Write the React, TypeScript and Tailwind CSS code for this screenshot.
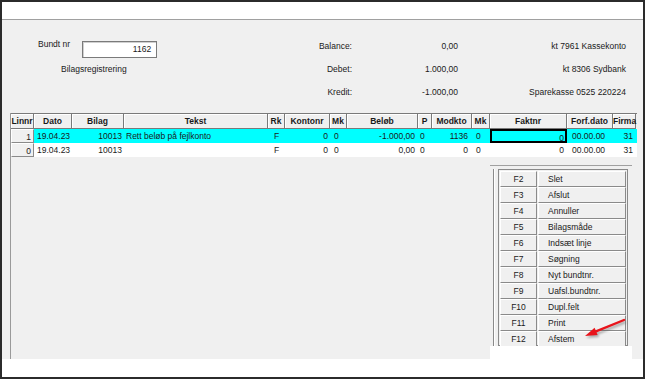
const COLS =
  "grid-cols-[23px_38px_52px_144px_17px_45px_17px_71px_14px_40px_18px_77px_46px_23px]";

const HEADERS = [
  "Linnr",
  "Dato",
  "Bilag",
  "Tekst",
  "Rk",
  "Kontonr",
  "Mk",
  "Beløb",
  "P",
  "Modkto",
  "Mk",
  "Faktnr",
  "Forf.dato",
  "Firma",
];

type Row = {
  linnr: string;
  dato: string;
  bilag: string;
  tekst: string;
  belob: string;
  modkto: string;
  active: boolean;
};

const ROWS: Row[] = [
  {
    linnr: "1",
    dato: "19.04.23",
    bilag: "10013",
    tekst: "Rett beløb på fejlkonto",
    belob: "-1.000,00",
    modkto: "1136",
    active: true,
  },
  {
    linnr: "0",
    dato: "19.04.23",
    bilag: "10013",
    tekst: "",
    belob: "0,00",
    modkto: "0",
    active: false,
  },
];

const KEYS = [
  ["F2", "Slet"],
  ["F3", "Afslut"],
  ["F4", "Annuller"],
  ["F5", "Bilagsmåde"],
  ["F6", "Indsæt linje"],
  ["F7", "Søgning"],
  ["F8", "Nyt bundtnr."],
  ["F9", "Uafsl.bundtnr."],
  ["F10", "Dupl.felt"],
  ["F11", "Print"],
  ["F12", "Afstem"],
];

const bevel =
  "border border-t-white border-l-white border-b-[#8a8a8a] border-r-[#8a8a8a] bg-[#f0f0f0]";

function DataRow({ row }: { row: Row }) {
  const cell = "h-[14px] leading-[14px] whitespace-nowrap overflow-hidden";
  return (
    <div className={`grid ${COLS} ${row.active ? "bg-[#00ffff]" : "bg-white"}`}>
      <div className={`${cell} ${bevel} pr-[2px] text-right leading-[12px]`}>
        {row.linnr}
      </div>
      <div className={`${cell} pl-[3px]`}>{row.dato}</div>
      <div className={`${cell} pr-[2px] text-right`}>{row.bilag}</div>
      <div className={`${cell} pl-[2px]`}>{row.tekst}</div>
      <div className={`${cell} text-center`}>F</div>
      <div className={`${cell} pr-[2px] text-right`}>0</div>
      <div className={`${cell} pl-[4px]`}>0</div>
      <div className={`${cell} pr-[3px] text-right`}>{row.belob}</div>
      <div className={`${cell} pl-[2px]`}>0</div>
      <div className={`${cell} pr-[4px] text-right`}>{row.modkto}</div>
      <div className={`${cell} pl-[4px]`}>0</div>
      {row.active ? (
        <div className={`${cell} border-2 border-black pr-[1px] text-right leading-[10px]`}>0</div>
      ) : (
        <div className={`${cell} pr-[3px] text-right`}>0</div>
      )}
      <div className={`${cell} pl-[5px]`}>00.00.00</div>
      <div className={`${cell} pr-[3px] text-right`}>31</div>
    </div>
  );
}

function Arrow() {
  return (
    <svg
      className="pointer-events-none absolute left-[576px] top-[311px]"
      width="54"
      height="32"
      viewBox="0 0 54 32"
    >
      <defs>
        <filter id="blur" x="-20%" y="-20%" width="140%" height="140%">
          <feGaussianBlur stdDeviation="1.2" />
        </filter>
      </defs>
      <g filter="url(#blur)" opacity="0.45" transform="translate(1.5 2)">
        <path d="M46 7 L18 18.4" stroke="#555" strokeWidth="2.6" />
        <path d="M7 23 L19.6 22.1 L16.6 14.7 Z" fill="#555" />
      </g>
      <path d="M46 7 L18 18.4" stroke="#e8141b" strokeWidth="2.4" strokeLinecap="round" />
      <path d="M7 23 L19.6 22.1 L16.6 14.7 Z" fill="#e8141b" />
    </svg>
  );
}

export default function App() {
  return (
    <div
      className="relative flex h-[379px] w-[645px] flex-col border-2 border-[#2b2b2b] bg-white text-[8.5px] text-[#1a1a1a]"
      style={{ fontFamily: '"Liberation Sans", Arial, sans-serif' }}
    >
      <div className="h-[18px] shrink-0 border-b border-[#a0a0a0] bg-white" />

      <div className="flex h-[339px] shrink-0 flex-col bg-[#f0f0f0]">
        {/* info area */}
        <div className="flex h-[93px] shrink-0 pt-[15px]">
          <div className="w-[298px]">
            <div className="flex h-[23px] items-start">
              <span className="pl-[36px] pt-[4px] leading-[10px]">Bundt nr</span>
              <div className="ml-[12px] mt-[6px] flex h-[17px] w-[75px] items-center justify-end border border-[#7a7a7a] bg-white pr-[5px] shadow-[inset_1px_1px_0_#d0d0d0]">
                1162
              </div>
            </div>
            <div className="h-[23px] pl-[59px] leading-[23px]">Bilagsregistrering</div>
          </div>
          <div className="w-[52px] text-right leading-[23px]">
            <div>Balance:</div>
            <div>Debet:</div>
            <div>Kredit:</div>
          </div>
          <div className="w-[106px] text-right leading-[23px]">
            <div>0,00</div>
            <div>1.000,00</div>
            <div>-1.000,00</div>
          </div>
          <div className="w-[168px] text-right leading-[23px]">
            <div>kt 7961 Kassekonto</div>
            <div>kt 8306 Sydbank</div>
            <div>Sparekasse 0525 220224</div>
          </div>
        </div>

        {/* table area */}
        <div className="ml-[8px] mr-[6px] flex flex-1 flex-col border-l border-[#9a9a9a]">
          <div className={`grid ${COLS} border-t border-[#7a7a7a] bg-[#f0f0f0]`}>
            {HEADERS.map((h, i) => (
              <div
                key={i}
                className="h-[15px] whitespace-nowrap border-b border-r border-[#7a7a7a] text-center font-bold leading-[14px] shadow-[inset_1px_1px_0_#ffffff]"
              >
                {h}
              </div>
            ))}
          </div>
          {ROWS.map((r, i) => (
            <DataRow key={i} row={r} />
          ))}

          <div className="flex flex-1 justify-end">
            <div className="mr-[-1px] mt-[8px] flex w-[142px] flex-col">
              <div className="h-px bg-[#a0a0a0]" />
              <div className="flex h-[180px] pl-[3px] pt-[3px]">
                <div className="w-[2px] border-l border-r border-l-[#8a8a8a] border-r-white" />
                <div className="ml-[3px] flex w-[130px] flex-col border border-[#8a8a8a] px-px pt-px">
                  {KEYS.map(([k, label]) => (
                    <div key={k} className="flex h-[16px]">
                      <div className={`${bevel} w-[37px] text-center leading-[14px]`}>{k}</div>
                      <div className={`${bevel} ml-[1px] flex-1 pl-[9px] leading-[14px]`}>{label}</div>
                    </div>
                  ))}
                </div>
              </div>
              <div className="flex-1 bg-white" />
            </div>
            <div className="w-[6px]" />
          </div>
        </div>
      </div>

      <div className="flex-1 bg-white" />
      <Arrow />
    </div>
  );
}
